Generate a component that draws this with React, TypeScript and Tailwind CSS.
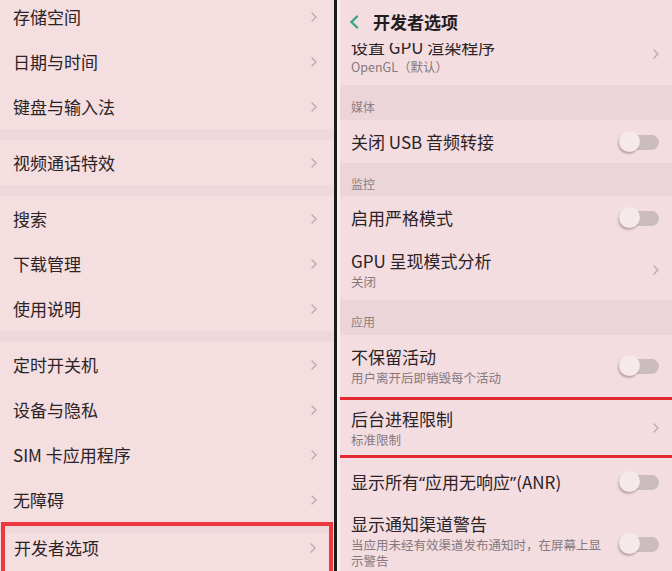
import React from "react";

const font = { fontFamily: '"Noto Sans CJK SC", "Noto Sans", sans-serif' };

function Chevron({ className = "" }: { className?: string }) {
  return (
    <svg width="6" height="10" viewBox="0 0 6 10" className={className}>
      <path d="M1 1 L5 5 L1 9" fill="none" stroke="#b8a9ad" strokeWidth="1.3" strokeLinecap="round" />
    </svg>
  );
}

function Toggle() {
  return (
    <div className="relative w-[40px] h-[22px] shrink-0">
      <div className="absolute right-0 top-[4px] w-[32px] h-[15px] rounded-full bg-[#cbbcc0]" />
      <div className="absolute left-0 top-0 w-[21px] h-[21px] rounded-full bg-[#f6e9eb] shadow-[-1px_2px_2px_rgba(90,60,70,0.35)]" />
    </div>
  );
}

const leftGroups = [
  ["存储空间", "日期与时间", "键盘与输入法"],
  ["视频通话特效"],
  ["搜索", "下载管理", "使用说明"],
  ["定时开关机", "设备与隐私", "SIM 卡应用程序", "无障碍"],
];

function LeftRow({ label }: { label: string }) {
  return (
    <div className="h-[45px] shrink-0 flex items-center justify-between pl-[13px] pr-[17px]">
      <span className="text-[17px] text-[#2b2326]">{label}</span>
      <Chevron />
    </div>
  );
}

function Section({ label, h, pt }: { label: string; h: string; pt: string }) {
  return (
    <div className={`${h} ${pt} shrink-0 bg-[#ebd5d9] pl-[11px] text-[12px] text-[#8d7f83]`}>{label}</div>
  );
}

function RightRow({
  title,
  sub,
  right,
  h,
}: {
  title: React.ReactNode;
  sub?: string[];
  right: "toggle" | "chevron";
  h: string;
}) {
  return (
    <div className={`${h} shrink-0 flex items-center justify-between pl-[11px] pr-[13px]`}>
      <div className="flex flex-col">
        <span className="text-[17px] leading-[22px] text-[#2b2326]">{title}</span>
        {sub?.map((s) => (
          <span key={s} className="text-[12.5px] leading-[16px] mt-[2px] text-[#86787c]">
            {s}
          </span>
        ))}
      </div>
      {right === "toggle" ? <Toggle /> : <Chevron />}
    </div>
  );
}

export default function App() {
  return (
    <div className="w-[672px] h-[571px] flex overflow-hidden bg-[#f4dfe1]" style={font}>
      {/* left settings list */}
      <div className="w-[334px] shrink-0 flex flex-col bg-[#f4dee0]">
        <div className="-mt-[6px]" />
        {leftGroups.map((g, i) => (
          <div key={i} className="flex flex-col">
            {g.map((l) => (
              <LeftRow key={l} label={l} />
            ))}
            <div className="h-[11px] bg-[#eed8db]" />
          </div>
        ))}
        <div className="-mt-[11px] h-[60px] shrink-0 border-[4px] border-[#ec3a3f] mx-[1px] flex items-center justify-between pl-[9px] pr-[13px] pb-[8px]">
          <span className="text-[17px] text-[#2b2326]">开发者选项</span>
          <Chevron />
        </div>
      </div>

      <div className="w-[3px] shrink-0 bg-[#1d1a1b]" />
      <div className="w-[3px] shrink-0 bg-[#f6efef]" />

      {/* developer options */}
      <div className="flex-1 flex flex-col bg-[#f3dde1]">
        <div className="h-[43px] shrink-0 flex items-center gap-[14px] pl-[9px]">
          <svg width="10" height="14" viewBox="0 0 10 14">
            <path d="M8 1.5 L2.5 7 L8 12.5" fill="none" stroke="#3aa486" strokeWidth="2.4" strokeLinecap="round" />
          </svg>
          <span className="text-[17px] font-bold text-[#221c1e]">开发者选项</span>
        </div>

        <div className="h-[42px] shrink-0 overflow-hidden flex items-start justify-between pl-[11px] pr-[13px]">
          <div className="flex flex-col -mt-[7px]">
            <span className="text-[17px] leading-[22px] text-[#2b2326]">设置 GPU 渲染程序</span>
            <span className="text-[12.5px] leading-[18px] text-[#86787c]">OpenGL（默认）</span>
          </div>
          <Chevron className="mt-[6px]" />
        </div>

        <Section label="媒体" h="h-[35px]" pt="pt-[13px]" />
        <RightRow title="关闭 USB 音频转接" right="toggle" h="h-[43px]" />
        <Section label="监控" h="h-[33px]" pt="pt-[12px]" />
        <RightRow title="启用严格模式" right="toggle" h="h-[44px]" />
        <RightRow title="GPU 呈现模式分析" sub={["关闭"]} right="chevron" h="h-[60px]" />
        <Section label="应用" h="h-[35px]" pt="pt-[13px]" />
        <RightRow title="不保留活动" sub={["用户离开后即销毁每个活动"]} right="toggle" h="h-[62px]" />
        <div className="h-[3px] shrink-0 bg-[#e22a30]" />
        <RightRow title="后台进程限制" sub={["标准限制"]} right="chevron" h="h-[55px]" />
        <div className="h-[3px] shrink-0 bg-[#e22a30]" />
        <RightRow
          title={
            <>
              显示所有<span className="font-['Noto_Sans']">“</span>应用无响应<span className="font-['Noto_Sans']">”</span>(ANR)
            </>
          }
          right="toggle"
          h="h-[48px]"
        />
        <div className="shrink-0 flex items-start justify-between pl-[11px] pr-[13px] pt-[7px]">
          <div className="flex flex-col w-[262px]">
            <span className="text-[17px] leading-[22px] text-[#2b2326]">显示通知渠道警告</span>
            <span className="text-[12.5px] leading-[16px] mt-[2px] text-[#86787c]">
              当应用未经有效渠道发布通知时，在屏幕上显示警告
            </span>
          </div>
          <div className="mt-[20px]">
            <Toggle />
          </div>
        </div>
      </div>
    </div>
  );
}
